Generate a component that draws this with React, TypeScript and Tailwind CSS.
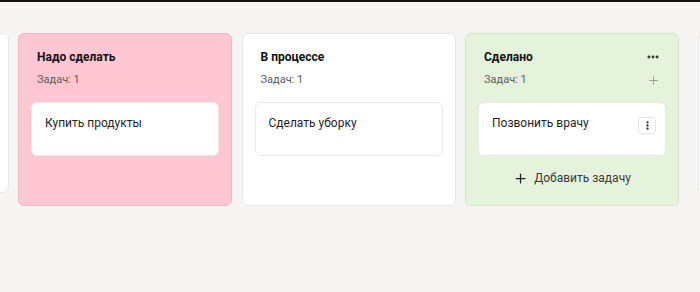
import React from 'react';
import { Plus, MoreHorizontal, MoreVertical } from 'lucide-react';

type Column = {
  title: string;
  tasks: string[];
  tone: string;
  extras?: boolean;
};

const columns: Column[] = [
  { title: 'Надо сделать', tasks: ['Купить продукты'], tone: 'bg-[#ffc7d2] border-[#f5b5c3]' },
  { title: 'В процессе', tasks: ['Сделать уборку'], tone: 'bg-white border-[#e6e6e6]' },
  { title: 'Сделано', tasks: ['Позвонить врачу'], tone: 'bg-[#e5f3dc] border-[#cfe6c3]', extras: true },
];

const TaskCard = ({ text, menu }: { text: string; menu?: boolean }) => (
  <div className="flex items-start justify-between h-[54px] rounded-md bg-white border border-[#e8e8e8] pl-[13px] pr-[9px] pt-[11px]">
    <span className="text-[12px] leading-[18px] text-[#1f1f1f]">{text}</span>
    {menu && (
      <button className="mt-[3px] flex items-center justify-center w-[18px] h-[17px] rounded-[3px] border border-[#e4e4e4] bg-white text-[#222]">
        <MoreVertical size={11} strokeWidth={3} />
      </button>
    )}
  </div>
);

const Board = ({ col }: { col: Column }) => (
  <div className={`shrink-0 w-[214px] h-[173px] rounded-md border ${col.tone} px-3 pt-[15px] flex flex-col`}>
    <div className="flex items-center justify-between pl-[6px] pr-[6px] h-[16px]">
      <h3 className="text-[12px] font-bold text-[#111]">{col.title}</h3>
      {col.extras && <MoreHorizontal size={14} strokeWidth={3} className="text-[#333]" />}
    </div>
    <div className="flex items-center justify-between pl-[6px] pr-[6px] mt-[7px] h-[16px]">
      <span className="text-[11px] text-[#5b5b5b]">Задач: {col.tasks.length}</span>
      {col.extras && <Plus size={13} strokeWidth={1.5} className="text-[#8a8a8a]" />}
    </div>
    <div className="mt-[14px] flex flex-col gap-2">
      {col.tasks.map((t) => (
        <TaskCard key={t} text={t} menu={col.extras} />
      ))}
    </div>
    {col.extras && (
      <button className="mt-[13px] flex items-center justify-center gap-[6px] text-[12px] text-[#3a3a3a]">
        <Plus size={15} strokeWidth={2} className="text-[#222]" />
        Добавить задачу
      </button>
    )}
  </div>
);

export default function App() {
  return (
    <div className="w-[700px] h-[292px] bg-[#f6f5f3] border-t-2 border-[#111] overflow-hidden font-['Roboto',sans-serif]">
      <div className="flex gap-[9.5px] pt-[31px]">
        <div className="shrink-0 w-[214px] h-[160px] -ml-[205.5px] rounded-md bg-white border border-[#e6e6e6]" />
        {columns.map((c) => (
          <Board key={c.title} col={c} />
        ))}
        <div className="shrink-0 w-[214px] h-[160px] ml-[9.5px] rounded-md bg-white border border-[#e6e6e6]" />
      </div>
    </div>
  );
}
